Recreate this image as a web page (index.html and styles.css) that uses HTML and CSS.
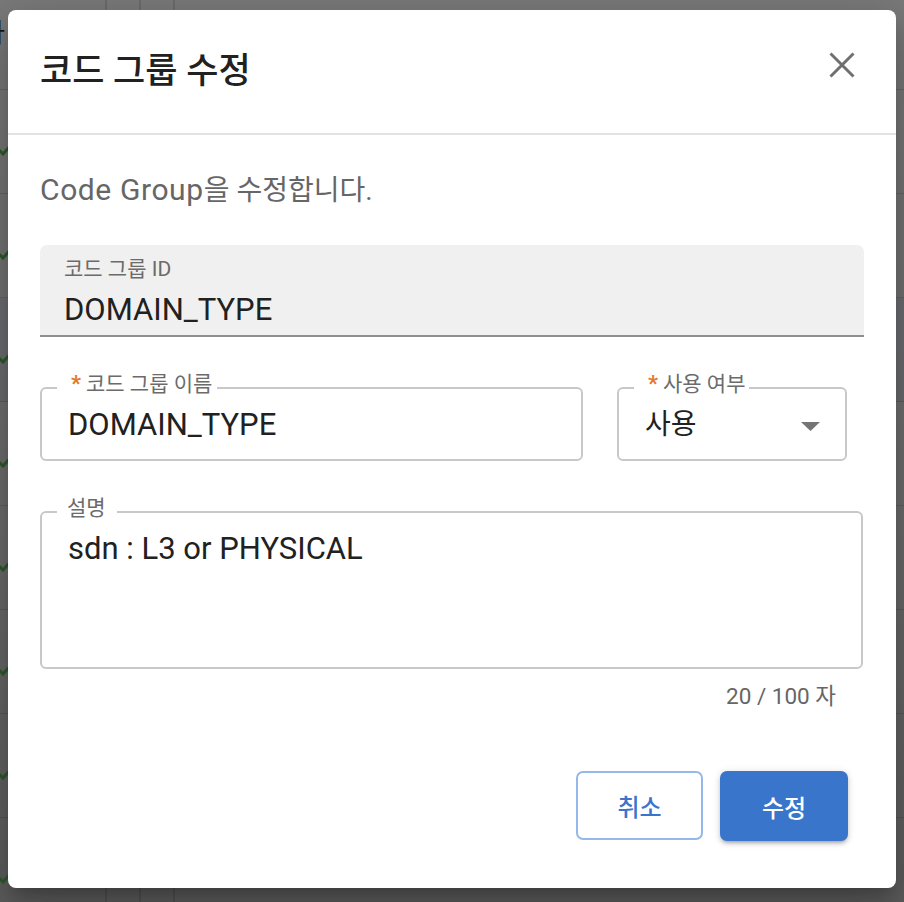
FILE: index.html
```html
<!DOCTYPE html>
<html lang="ko">
<head>
<meta charset="utf-8">
<title>코드 그룹 수정</title>
<link rel="stylesheet" href="styles.css">
</head>
<body>
<div class="page">
  <div class="bg-head"><span class="bg-text">사</span></div>
  <div class="bg-row"><svg class="chk" width="18" height="14" viewBox="0 0 18 14"><path d="M0 7 L5 12 L14 2" fill="none" stroke="#2c5a2b" stroke-width="3"/></svg></div>
  <div class="bg-row"><svg class="chk" width="18" height="14" viewBox="0 0 18 14"><path d="M0 7 L5 12 L14 2" fill="none" stroke="#2c5a2b" stroke-width="3"/></svg></div>
  <div class="bg-row hl"><svg class="chk" width="18" height="14" viewBox="0 0 18 14"><path d="M0 7 L5 12 L14 2" fill="none" stroke="#2c5a2b" stroke-width="3"/></svg></div>
  <div class="bg-row"><svg class="chk" width="18" height="14" viewBox="0 0 18 14"><path d="M0 7 L5 12 L14 2" fill="none" stroke="#2c5a2b" stroke-width="3"/></svg></div>
  <div class="bg-row"><svg class="chk" width="18" height="14" viewBox="0 0 18 14"><path d="M0 7 L5 12 L14 2" fill="none" stroke="#2c5a2b" stroke-width="3"/></svg></div>
  <div class="bg-row"><svg class="chk" width="18" height="14" viewBox="0 0 18 14"><path d="M0 7 L5 12 L14 2" fill="none" stroke="#2c5a2b" stroke-width="3"/></svg></div>
  <div class="bg-row"><svg class="chk" width="18" height="14" viewBox="0 0 18 14"><path d="M0 7 L5 12 L14 2" fill="none" stroke="#2c5a2b" stroke-width="3"/></svg></div>
  <div class="bg-row"><svg class="chk" width="18" height="14" viewBox="0 0 18 14"><path d="M0 7 L5 12 L14 2" fill="none" stroke="#2c5a2b" stroke-width="3"/></svg></div>

  <div class="dialog">
    <div class="dlg-head">
      <h2 class="dlg-title">코드 그룹 수정</h2>
      <button class="close-btn" type="button" aria-label="닫기">
        <svg width="26" height="26" viewBox="0 0 26 26"><path d="M1.5 1.5 L24.5 24.5 M24.5 1.5 L1.5 24.5" stroke="#707070" stroke-width="3" fill="none"/></svg>
      </button>
    </div>
    <div class="dlg-body">
      <p class="subtitle"><span class="en">Code Group</span>을 수정합니다.</p>

      <div class="filled">
        <div class="filled-label">코드 그룹 ID</div>
        <div class="filled-value">DOMAIN_TYPE</div>
      </div>

      <div class="field-row">
        <fieldset class="out">
          <legend class="lg lg-name"><span class="req">*</span>코드 그룹 이름</legend>
          <div class="fv">DOMAIN_TYPE</div>
        </fieldset>
        <fieldset class="out">
          <legend class="lg lg-sel"><span class="req">*</span>사용 여부</legend>
          <div class="fv sel">
            <span class="sel-value">사용</span>
            <svg class="caret" width="19" height="9" viewBox="0 0 19 9"><polygon points="0,0 19,0 9.5,9" fill="#757575"/></svg>
          </div>
        </fieldset>
      </div>

      <fieldset class="out area">
        <legend class="lg lg-desc">설명</legend>
        <div class="fv area-value">sdn : L3 or PHYSICAL</div>
      </fieldset>

      <div class="counter">20 / 100 자</div>

      <div class="actions">
        <button class="btn btn-outline" type="button">취소</button>
        <button class="btn btn-primary" type="button">수정</button>
      </div>
    </div>
  </div>
</div>
</body>
</html>
```

FILE: styles.css
```css
* { box-sizing: border-box; }
html, body { margin: 0; padding: 0; }
body {
  width: 904px;
  height: 902px;
  overflow: hidden;
  font-family: Roboto, "Noto Sans CJK KR", sans-serif;
}

/* backdrop (page behind modal overlay) */
.page {
  position: relative;
  width: 904px;
  height: 902px;
  overflow: hidden;
  background:
    linear-gradient(90deg, transparent 105px, rgba(0,0,0,.12) 105px 107px, transparent 107px 139px, rgba(0,0,0,.12) 139px 141px, transparent 141px 173px, rgba(0,0,0,.12) 173px 175px, transparent 175px),
    linear-gradient(180deg, #7a7a7a 0%, #6d6d6d 55%, #5d5d5d 100%);
}
.bg-head {
  height: 90px;
  border-bottom: 1px solid rgba(0,0,0,.12);
  padding-top: 16px;
  font-size: 26px;
  line-height: 34px;
}
.bg-text { color: #161616; margin-left: -19px; }
.bg-row {
  height: 104px;
  border-bottom: 1px solid rgba(0,0,0,.12);
  padding-top: 52px;
  display: flex;
  align-items: flex-start;
}
.bg-row.hl { background: rgba(70, 80, 110, .10); }
.chk { margin-left: -2px; display: block; }

/* dialog */
.dialog {
  position: absolute;
  top: 10px;
  left: 8px;
  width: 888px;
  height: 878px;
  background: #fff;
  border-radius: 8px;
  box-shadow: 0 11px 15px -7px rgba(0,0,0,.2), 0 24px 38px 3px rgba(0,0,0,.14), 0 9px 46px 8px rgba(0,0,0,.12);
  display: flex;
  flex-direction: column;
}
.dlg-head {
  height: 125px;
  display: flex;
  align-items: center;
  padding: 0 34.5px 0 32px;
  border-bottom: 2px solid #e2e2e2;
}
.dlg-title {
  margin: 0;
  font-size: 35px;
  line-height: 42px;
  font-weight: 500;
  color: #212121;
}
.close-btn {
  align-self: flex-start;
  margin-top: 34.5px;
  margin-left: auto;
  width: 40px;
  height: 40px;
  padding: 0;
  border: 0;
  background: transparent;
  display: flex;
  align-items: center;
  justify-content: center;
}
.close-btn svg { display: block; }

.dlg-body {
  padding: 37px 32px 0 32px;
}
.subtitle {
  margin: 0;
  font-size: 28px;
  line-height: 36px;
  color: #666;
}
.subtitle .en { font-size: 30px; letter-spacing: .6px; }

/* filled (readonly) field */
.filled {
  margin-top: 36px;
  height: 92px;
  background: #f0f0f0;
  border-radius: 7px 7px 0 0;
  border-bottom: 2px solid #8e8e8e;
  padding: 12px 24px 7px;
}
.filled-label {
  font-size: 21px;
  line-height: 25px;
  color: #6b6b6b;
  margin-bottom: 10px;
}
.filled-value {
  font-size: 31px;
  line-height: 36px;
  color: #212121;
}

/* outlined fields */
.field-row {
  margin-top: 35.5px;
  display: grid;
  grid-template-columns: 543px 230px;
  column-gap: 34px;
}
.out {
  margin: 0;
  min-width: 0;
  padding: 0 24px 0 26px;
  border: 2px solid #c8c8c8;
  border-radius: 6px;
}
.lg {
  font-size: 21px;
  line-height: 22px;
  color: #6b6b6b;
  margin-left: -11px;
  padding: 0 5px 8px 14px;
  white-space: nowrap;
}
.lg-sel { padding-right: 3px; }
.lg-desc { padding-left: 10px; padding-right: 11px; }
.req {
  color: #e5792a;
  font-weight: 700;
  font-size: 22px;
  margin-right: 5px;
}
.fv {
  padding: 4.5px 0 16px;
  font-size: 31px;
  line-height: 36px;
  color: #212121;
  height: 56.5px;
}
.sel {
  display: flex;
  align-items: center;
  justify-content: space-between;
  padding-right: 0;
}
.sel-value { font-size: 28px; line-height: 36px; }
.caret { display: block; margin-right: 1px; margin-top: 3px; }

.area { margin-top: 36px; margin-right: 1px; }
.area-value {
  padding-top: 4px;
  height: 140px;
}

.counter {
  margin-top: 12px;
  font-size: 22.5px;
  line-height: 30px;
  color: #666;
  text-align: right;
  padding-right: 28px;
}

.actions {
  margin-top: 60px;
  display: flex;
  justify-content: flex-end;
  align-items: flex-start;
  gap: 17px;
  padding-right: 16px;
}
.btn {
  font-family: inherit;
  font-size: 24px;
  font-weight: 500;
  border-radius: 7px;
  display: flex;
  align-items: center;
  justify-content: center;
  padding: 0;
  cursor: pointer;
}
.btn-outline {
  width: 127px;
  height: 69px;
  background: #fff;
  border: 2px solid #95b8ea;
  color: #3a74cc;
}
.btn-primary {
  width: 128px;
  height: 70px;
  background: #3a75cc;
  border: 0;
  color: #fff;
  box-shadow: 0 3px 3px -2px rgba(0,0,0,.2), 0 3px 4px 0 rgba(0,0,0,.14), 0 1px 8px 0 rgba(0,0,0,.12);
}
```
